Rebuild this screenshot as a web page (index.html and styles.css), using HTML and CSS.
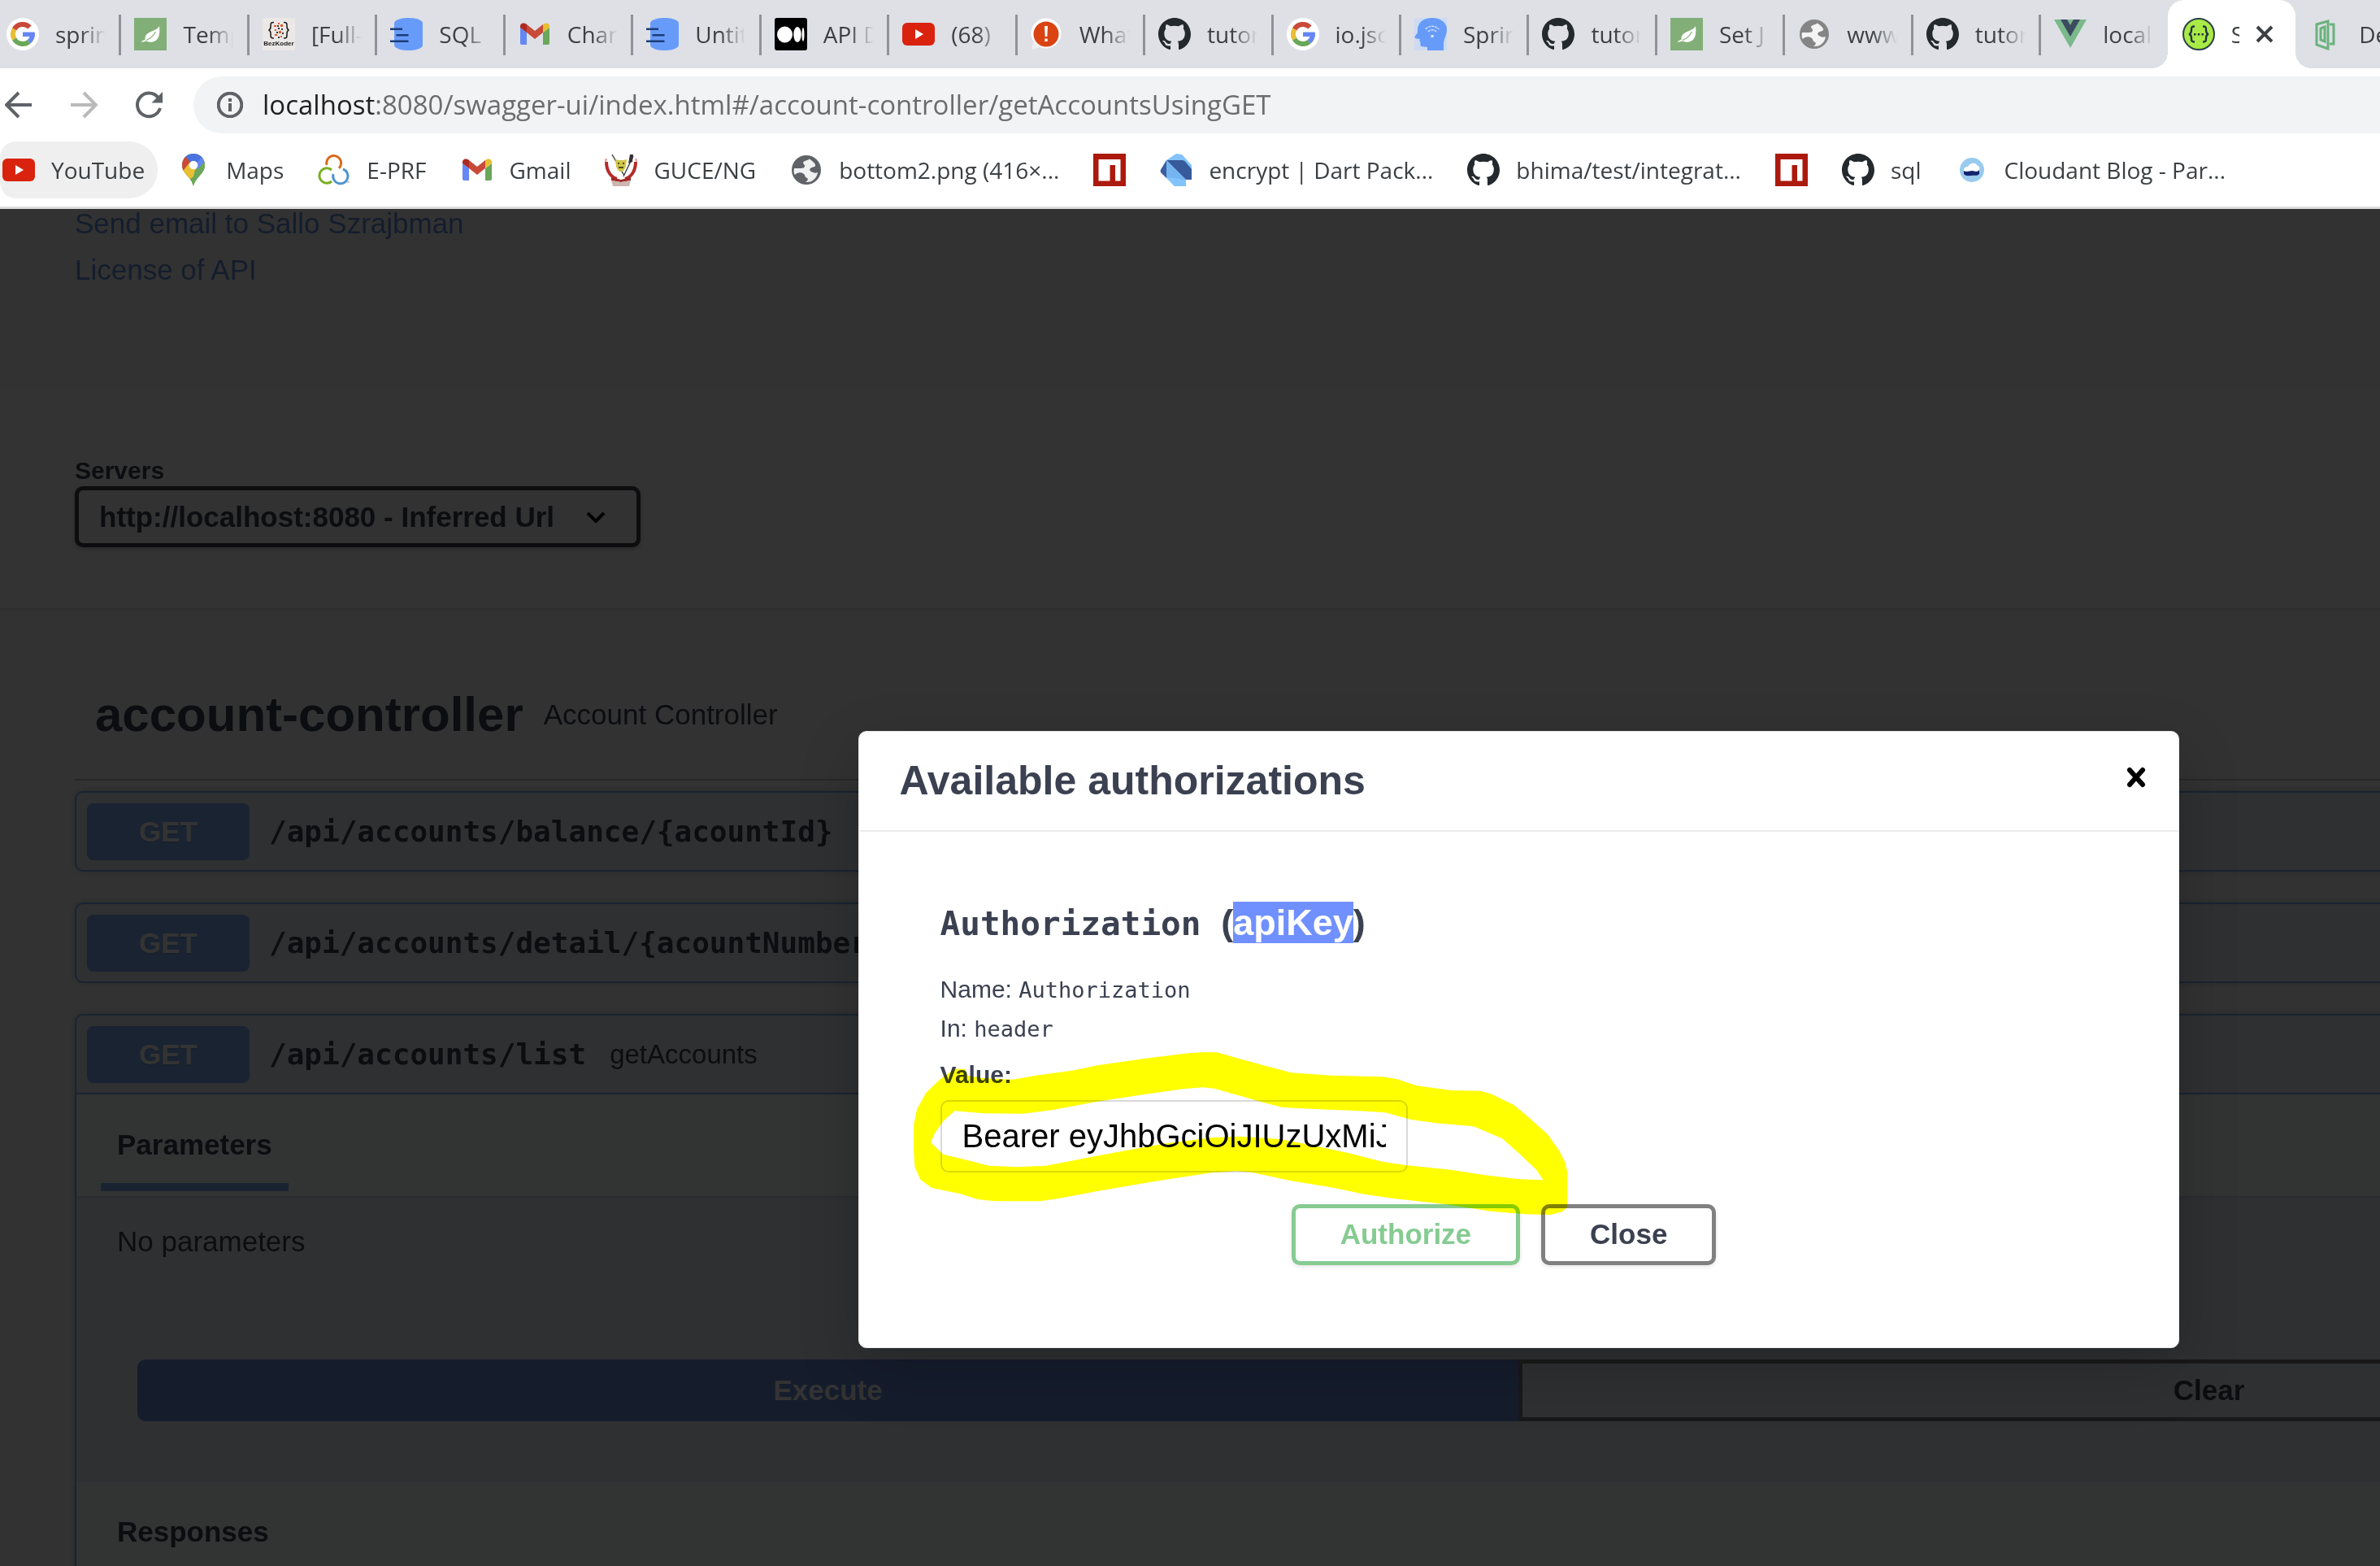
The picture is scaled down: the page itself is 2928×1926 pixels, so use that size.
FILE: index.html
```html
<!DOCTYPE html>
<html lang="en">
<head>
<meta charset="utf-8">
<title>Swagger UI</title>
<link rel="stylesheet" href="styles.css">
</head>
<body>
<svg class="sprite" aria-hidden="true">
  <symbol id="google" viewBox="0 0 40 40">
    <circle cx="20" cy="20" r="20" fill="#fff"/>
    <g fill="none" stroke-width="6">
      <path d="M28.500 11.500A12 12 0 0 0 9.600 14" stroke="#c94a38"/>
      <path d="M9.600 14A12 12 0 0 0 9.600 26" stroke="#e8be33"/>
      <path d="M9.600 26A12 12 0 0 0 27.700 29.200" stroke="#6aa75a"/>
      <path d="M27.700 29.200A12 12 0 0 0 32 20" stroke="#6487f4"/>
    </g>
    <path d="M20 17.500h14.700a15 15 0 0 1 0 5.500H20z" fill="#6487f4"/>
  </symbol>
  <symbol id="leaf" viewBox="0 0 40 40">
    <path d="M0 0h40v40H0z" fill="#82af78"/>
    <path d="M31 10c1 9 0 18-8 19.500-3 .6-6 .2-8-1.200-2 1-4 1.500-6.500 1.200.8-1.500 3-1.500 5-2.800C13 15 27 18 31 10z" fill="#fff"/>
    <path d="M15 27.500c5-2 9-6 11.500-10.500" fill="none" stroke="#82af78" stroke-width="1.200"/>
  </symbol>
  <symbol id="bez" viewBox="0 0 40 40">
    <path d="M0 0h40v40H0z" fill="#ebe8e5"/>
    <path d="M14 5.500c-4 0-4 1-4 5 0 3-.5 4-2.500 4.500 2 .5 2.500 2 2.500 5 0 4 0 5 4 5M26 5.500c4 0 4 1 4 5 0 3 .5 4 2.500 4.500-2 .5-2.500 2-2.500 5 0 4 0 5-4 5" fill="none" stroke="#222" stroke-width="1.600"/>
    <path d="M14 9h3v2h-3zM19 6h2v2h-2zM22 8h3v3h-3zM15 14h2v2h-2zM20 16h3v3h-3zM15 20h3v2h-3zM22 22h2v2h-2z" fill="#e05a30"/>
    <path d="M18 9h2v2h-2zM17 17h2v2h-2zM23 13h2v2h-2zM19 12h2v2h-2zM19 23h2v2h-2zM24 18h2v2h-2z" fill="#333"/>
    <text x="20" y="34" text-anchor="middle" font-family="Liberation Sans, sans-serif" font-weight="700" font-size="8" fill="#222">BezKoder</text>
  </symbol>
  <symbol id="sqldb" viewBox="0 0 40 40">
    <path d="M5 6C7 1 17 0 22.500 0S38 1 40 6v28c-2 5-12 6-17.500 6S7 39 5 34z" fill="#679bfa"/>
    <path d="M0 13.800h15M7.500 21.300h15M0 28.800h22.500" stroke="#1c3d78" stroke-width="2.500"/>
  </symbol>
  <symbol id="gmail" viewBox="0 0 40 40">
    <path d="M2 12l8 6v15H4a2 2 0 0 1-2-2z" fill="#6487f4"/>
    <path d="M38 12l-8 6v15h6a2 2 0 0 0 2-2z" fill="#6aa75a"/>
    <path d="M2 12c-1-5 4-7 8-4v10l-8-6z" fill="#ad2a22"/>
    <path d="M38 12c1-5-4-7-8-4v10l8-6z" fill="#e8be33"/>
    <path d="M10 8l10 8 10-8v10l-10 8-10-8z" fill="#c94a38"/>
  </symbol>
  <symbol id="medium" viewBox="0 0 40 40">
    <rect width="40" height="40" rx="3"/>
    <ellipse cx="12.500" cy="20.500" rx="9.500" ry="10" fill="#fff"/>
    <ellipse cx="28" cy="20.500" rx="4.700" ry="9.500" fill="#fff"/>
    <ellipse cx="35" cy="20.500" rx="1.500" ry="8.500" fill="#fff"/>
  </symbol>
  <symbol id="youtube" viewBox="0 0 40 40">
    <rect y="6" width="40" height="28" rx="6" fill="#d9230f"/>
    <path d="M16 14l10 6-10 6z" fill="#fff"/>
  </symbol>
  <symbol id="alert" viewBox="0 0 40 40">
    <circle cx="19" cy="19" r="18.500" fill="#fff"/><path d="M1 39l3-11 8 8z" fill="#eee"/>
    <circle cx="19" cy="20" r="15.500" fill="#d94412"/>
    <path d="M17 10h4l-.7 13h-2.600zM17.300 25.500h3.400V29h-3.400z" fill="#fff"/>
  </symbol>
  <symbol id="github" viewBox="0 0 16 16">
    <path fill="#24292e" d="M8 0C3.580 0 0 3.580 0 8c0 3.540 2.290 6.530 5.470 7.590.4.070.55-.17.55-.38 0-.19-.01-.82-.01-1.490-2.010.37-2.530-.49-2.690-.94-.09-.23-.48-.94-.82-1.130-.28-.15-.68-.52-.01-.53.630-.01 1.080.58 1.230.82.720 1.210 1.870.87 2.330.66.070-.52.280-.87.510-1.070-1.780-.2-3.640-.89-3.640-3.950 0-.87.310-1.590.820-2.150-.08-.2-.36-1.020.080-2.120 0 0 .67-.21 2.200.820.640-.18 1.320-.27 2-.27.680 0 1.360.090 2 .270 1.530-1.040 2.200-.82 2.200-.82.440 1.100.160 1.920.080 2.120.510.560.820 1.270.820 2.150 0 3.070-1.870 3.750-3.650 3.950.290.250.540.730.540 1.480 0 1.070-.01 1.930-.01 2.200 0 .210.150.460.550.380A8.013 8.013 0 0016 8c0-4.420-3.580-8-8-8z"/>
  </symbol>
  <symbol id="head" viewBox="0 0 40 40">
    <path d="M0 0h40v40H0z" fill="#cddaf2"/>
    <path d="M4 15C4 5 12 0 22 0s18 6 18 14c0 7-4 12-4 18v8H16v-4l-8-1c-1-2 0-4-1-6-1-1-1-2 0-3-3 0-6-1-7-2l4-6z" fill="#679bfa"/>
    <path d="M14 14c4-5 12-5 16 0M17 17c3-3 7-3 10 0" fill="none" stroke="#cfe0ff" stroke-width="1.500" stroke-dasharray="3 1"/>
    <path d="M20.500 21h3v3h-3z" fill="#e5eeff"/>
  </symbol>
  <symbol id="globe" viewBox="0 0 40 40">
    <circle cx="20" cy="20" r="18" fill="currentColor"/>
    <path d="M24 6c-2 3-7 2-8 5 0 2 2 2 2 4 0 3-3 3-6 3H5c-1 4 0 7 1 8 2-3 8-4 11-1 2 2 1 4 4 5 2 1 0 4-2 5 8 1 14-5 15-12-2 1-4 1-6 0-3-1-5-3-3-5s5-1 6-3-3-6-8-9z" fill="#fff" opacity=".9"/>
  </symbol>
  <symbol id="vue" viewBox="0 0 40 40">
    <path d="M0 2h40L20 37z" fill="#7aba8a"/><path d="M8 2h8l4 7 4-7h8L20 23z" fill="#3d4a60"/>
  </symbol>
  <symbol id="swagger" viewBox="0 0 40 40">
    <circle cx="20" cy="20" r="19" fill="#aaea46" stroke="#2c4148" stroke-width="2"/>
    <path d="M15 10.500c-4 0-4 1-4 4s-.5 5-3 5.500c2.500.5 3 2 3 5s0 4.500 4 4.500M25 10.500c4 0 4 1 4 4s.5 5 3 5.500c-2.500.5-3 2-3 5s0 4.500-4 4.500" fill="none" stroke="#203540" stroke-width="2.400"/>
    <path d="M14 19h2.500v2.500H14zM18.800 19h2.500v2.500h-2.500zM23.500 19H26v2.500h-2.500z" fill="#203540"/>
  </symbol>
  <symbol id="door" viewBox="0 0 40 40">
    <g fill="none" stroke="#6bb27c" stroke-width="3"><path d="M8 8l14-4v34L8 33zM13 13l5-2v18l-5-2zM24 8h5v24h-5"/></g>
  </symbol>
  <symbol id="maps" viewBox="0 0 40 40">
    <clipPath id="pin"><path d="M20 0c8 0 14 6 14 14 0 11-11 14-14 26C17 28 6 25 6 14 6 6 12 0 20 0z"/></clipPath>
    <g clip-path="url(#pin)">
      <path d="M0 0h40v40H0z" fill="#6aa75a"/>
      <path d="M4 20L30-6 44 6 20 28 9 37z" fill="#e8be33"/>
      <path d="M17 13L32 0h8v8L24 18z" fill="#6487f4"/><path d="M9 5L20 16 36-2H9z" fill="#4a72e0"/>
      <path d="M0 0h7l9 10-12 15z" fill="#c94a38"/>
      <path d="M22 20L36 6v34H17z" fill="#6aa75a"/><path d="M24 12L32 2l4 5-12 13z" fill="#6487f4"/>
    </g>
    <circle cx="20" cy="14" r="5.300" fill="#fff"/>
  </symbol>
  <symbol id="eprf" viewBox="0 0 40 40">
    <g fill="none" stroke-width="3">
      <path d="M11 14a9 9 0 1 1 15 4" stroke="#d96a1c"/>
      <path d="M17 20A9.200 9.200 0 1 0 17 34" stroke="#7aaf22"/>
      <path d="M19 25a9.200 9.200 0 1 0 12-6" stroke="#4f94d0"/>
    </g>
    <path d="M36 34h3v1.500h-3z" fill="#bbb"/>
  </symbol>
  <symbol id="guce" viewBox="0 0 40 40">
    <path d="M2 10c0 12 6 19 13 21M38 10c0 12-6 19-13 21" fill="none" stroke="#b52a2a" stroke-width="4"/>
    <path d="M2 9l-2-2M38 9l2-2" stroke="#e9a0a0" stroke-width="4"/>
    <path d="M9 1l15 26M35 3L23 28" stroke="#444" stroke-width="1.500"/>
    <path d="M31 1h4l-1 9-5 2z" fill="#333"/>
    <path d="M13 7l4 1h6l4-1-1 9c-2 4-3 6-6 6s-4-2-6-6z" fill="#cfc648"/>
    <path d="M16 11h2v2h-2zM22 11h2v2h-2zM17 16h6v2h-6z" fill="#554d20"/>
    <path d="M8 29l12 3 12-3v4l-12 2-12-2z" fill="#a32828"/><path d="M8 33l12 2 12-2-2 7H10z" fill="#cdb6ae"/>
  </symbol>
  <symbol id="npm" viewBox="0 0 40 40">
    <path d="M0 0h40v40H0z" fill="#ac190d"/><path d="M6.500 7h27v26.500H27V14h-6.500v19.500h-14z" fill="#fff"/>
  </symbol>
  <symbol id="dart" viewBox="0 0 40 40">
    <path d="M8 8L20 0l7 1 12 13v18h-7v8H18L7 29z" fill="#82c4fa"/>
    <path d="M8 8v22L1 23c-1-2 0-4 1-5z" fill="#3a5f9e"/>
    <path d="M8 8h18c4 0 5 1 7 4l6 7v13h-7z" fill="#375a9b"/>
    <path d="M8 8l24 24-14-2-10-1z" fill="#74b4f0"/>
  </symbol>
  <symbol id="cloudant" viewBox="0 0 40 40">
    <circle cx="20" cy="20" r="15" fill="#98cbee"/>
    <path d="M10 20h19v5c-3 3-6 1-9.500 2-4 0-7 1-9.500-2z" fill="#14246e"/>
    <path d="M10 21c-1-4 3-5 5-5 3-6 11-5 12-1 3 0 3 5 1 6-3 2-5 0-8 0s-7 2-10 0z" fill="#fff"/>
  </symbol>
</svg>

<header class="browser">
  <nav class="tabs" aria-label="Tabs">
    <button class="tab"><svg class="icon"><use href="#google"/></svg><span class="tab-title">spring</span></button>
    <button class="tab"><svg class="icon"><use href="#leaf"/></svg><span class="tab-title">Temp</span></button>
    <button class="tab"><svg class="icon"><use href="#bez"/></svg><span class="tab-title">[Full-</span></button>
    <button class="tab"><svg class="icon"><use href="#sqldb"/></svg><span class="tab-title">SQL</span></button>
    <button class="tab"><svg class="icon"><use href="#gmail"/></svg><span class="tab-title">Chan</span></button>
    <button class="tab"><svg class="icon"><use href="#sqldb"/></svg><span class="tab-title">Untit</span></button>
    <button class="tab"><svg class="icon"><use href="#medium"/></svg><span class="tab-title">API D</span></button>
    <button class="tab"><svg class="icon"><use href="#youtube"/></svg><span class="tab-title">(68)</span></button>
    <button class="tab"><svg class="icon"><use href="#alert"/></svg><span class="tab-title">What</span></button>
    <button class="tab"><svg class="icon"><use href="#github"/></svg><span class="tab-title">tutor</span></button>
    <button class="tab"><svg class="icon"><use href="#google"/></svg><span class="tab-title">io.json</span></button>
    <button class="tab"><svg class="icon"><use href="#head"/></svg><span class="tab-title">Spring</span></button>
    <button class="tab"><svg class="icon"><use href="#github"/></svg><span class="tab-title">tutor</span></button>
    <button class="tab"><svg class="icon"><use href="#leaf"/></svg><span class="tab-title">Set J</span></button>
    <button class="tab"><svg class="icon muted"><use href="#globe"/></svg><span class="tab-title">www.</span></button>
    <button class="tab"><svg class="icon"><use href="#github"/></svg><span class="tab-title">tutor</span></button>
    <button class="tab before-active"><svg class="icon"><use href="#vue"/></svg><span class="tab-title">locall</span></button>
    <button class="tab active"><svg class="icon"><use href="#swagger"/></svg><span class="tab-title short">S</span><svg class="tab-close" viewBox="0 0 22 22"><path d="M2 2l18 18M20 2L2 20"/></svg></button>
    <button class="tab"><svg class="icon"><use href="#door"/></svg><span class="tab-title">Dev</span></button>
  </nav>

  <div class="toolbar">
    <button class="nav-btn" aria-label="Back"><svg viewBox="0 0 34 34"><path d="M33 17H4M17 2L2 17l15 15"/></svg></button>
    <button class="nav-btn disabled" aria-label="Forward"><svg viewBox="0 0 34 34"><path d="M1 17h29M17 2l15 15-15 15"/></svg></button>
    <button class="nav-btn" aria-label="Reload"><svg viewBox="0 0 34 34"><path d="M28.500 8A14.300 14.300 0 1 0 31 21"/><path d="M34 1v13.500H20.500z" class="solid"/></svg></button>
    <div class="omnibox">
      <svg class="info" viewBox="0 0 32 32"><circle cx="16" cy="16" r="14.300"/><path d="M16 14v10M16 8v4"/></svg>
      <div class="url" role="textbox" contenteditable="true" spellcheck="false" aria-label="Address"><span class="host">localhost</span>:8080/swagger-ui/index.html#/account-controller/getAccountsUsingGET</div>
    </div>
  </div>

  <nav class="bookmarks" aria-label="Bookmarks">
    <a class="bookmark hovered" href="#"><svg class="icon"><use href="#youtube"/></svg>YouTube</a>
    <a class="bookmark" href="#"><svg class="icon"><use href="#maps"/></svg>Maps</a>
    <a class="bookmark" href="#"><svg class="icon"><use href="#eprf"/></svg>E-PRF</a>
    <a class="bookmark" href="#"><svg class="icon"><use href="#gmail"/></svg>Gmail</a>
    <a class="bookmark" href="#"><svg class="icon"><use href="#guce"/></svg>GUCE/NG</a>
    <a class="bookmark" href="#"><svg class="icon"><use href="#globe"/></svg>bottom2.png (416×...</a>
    <a class="bookmark" href="#" aria-label="npm"><svg class="icon"><use href="#npm"/></svg></a>
    <a class="bookmark" href="#"><svg class="icon"><use href="#dart"/></svg>encrypt | Dart Pack...</a>
    <a class="bookmark" href="#"><svg class="icon"><use href="#github"/></svg>bhima/test/integrat...</a>
    <a class="bookmark" href="#" aria-label="npm"><svg class="icon"><use href="#npm"/></svg></a>
    <a class="bookmark" href="#"><svg class="icon"><use href="#github"/></svg>sql</a>
    <a class="bookmark" href="#"><svg class="icon"><use href="#cloudant"/></svg>Cloudant Blog - Par...</a>
  </nav>
</header>

<div class="viewport">
  <main class="page">
    <section class="info-links">
      <a href="#">Send email to Sallo Szrajbman</a>
      <a href="#">License of API</a>
    </section>

    <section class="scheme">
      <label for="servers">Servers</label>
      <div class="server-select">
        <select id="servers"><option>http://localhost:8080 - Inferred Url</option></select>
        <svg class="chevron" viewBox="0 0 24 14"><path d="M2 2l10 10L22 2"/></svg>
      </div>
    </section>

    <section class="tag-section">
      <h3 class="tag">account-controller <small>Account Controller</small></h3>

      <div class="opblock">
        <div class="summary"><span class="method">GET</span><span class="path">/api/accounts/balance/{acountId}</span></div>
      </div>
      <div class="opblock">
        <div class="summary"><span class="method">GET</span><span class="path">/api/accounts/detail/{acountNumber}</span></div>
      </div>
      <div class="opblock open">
        <div class="summary"><span class="method">GET</span><span class="path">/api/accounts/list</span><span class="desc">getAccounts</span></div>
        <div class="section-header"><h4 class="section-tab selected">Parameters</h4></div>
        <div class="params">
          <p>No parameters</p>
          <div class="btn-group"><button class="execute">Execute</button><button class="clear">Clear</button></div>
        </div>
        <div class="section-header responses"><h4 class="section-tab">Responses</h4></div>
      </div>
    </section>
  </main>

  <div class="backdrop">
    <div class="dialog" role="dialog" aria-labelledby="dialog-title">
      <div class="dialog-header">
        <h3 id="dialog-title">Available authorizations</h3>
        <button class="dialog-close" aria-label="Close dialog"><svg viewBox="0 0 24 26"><path d="M4 4l16 18M20 4L4 22"/></svg></button>
      </div>
      <div class="dialog-body">
        <h4 class="auth-name"><code>Authorization </code>(<mark>apiKey</mark>)</h4>
        <p class="auth-row">Name: <code>Authorization</code></p>
        <p class="auth-row">In: <code>header</code></p>
        <label class="auth-label" for="token">Value:</label>
        <input class="auth-input" id="token" type="text" value="Bearer eyJhbGciOiJIUzUxMiJ9">
        <div class="auth-actions">
          <button class="btn authorize">Authorize</button>
          <button class="btn">Close</button>
        </div>
      </div>
      <svg class="highlighter" viewBox="118 71 1146 600" preserveAspectRatio="none" aria-hidden="true">
        <path fill-rule="evenodd" d="M190 133L208 133L212 158L240 167L292 172L330 158L400 138L440 120L530 93L600 75L628 71L650 72L690 96L740 124L780 147L850 157L940 162L965 170L1000 195L1060 212L1112 214L1130 225L1170 265L1190 300L1230 375L1250 435L1260 475L1264 510V645L1255 660L1235 671L1190 669L1130 658L1050 632L960 611L910 596L850 570L780 546L710 514L685 510L640 516L540 548L440 584L370 612L340 621H260L230 614L200 594L150 572L130 542L120 495L118 430V340L124 280L140 220L165 170ZM190 288L240 297L310 298L360 285L440 253L520 228L590 207L625 201L645 205L680 226L730 256L765 275L830 282L900 288L945 294L990 320L1040 334L1100 345L1150 390L1180 445L1210 505L1222 543L1180 540L1120 525L1060 505L980 488L940 475L880 443L800 408L760 392L690 382L640 387L560 408L480 438L420 462L350 490L300 495L250 490L220 474L170 448L148 405L155 370L170 325Z"/>
      </svg>
    </div>
  </div>
</div>
</body>
</html>
```
FILE: styles.css
```css
* { box-sizing: border-box; }

html, body { height: 100%; }

body {
  margin: 0;
  display: flex;
  flex-direction: column;
  overflow: hidden;
  color: #3b4151;
  font-family: "Liberation Sans", Arial, sans-serif;
  font-size: 35px;
}

button, select, input { font: inherit; color: inherit; }
button { border: 0; background: none; padding: 0; margin: 0; }
h3, h4, p { margin: 0; }
a { text-decoration: none; }
svg { display: block; flex: none; }
.sprite { position: absolute; width: 0; height: 0; }

/* Browser chrome */
.browser {
  flex: none;
  background: #fff;
  border-bottom: 3px solid #dcdcdc;
  font-family: "Open Sans", "Noto Sans", sans-serif;
  color: #3c4043;
}
.icon { width: 40px; height: 40px; color: #5f6368; }
.icon.muted { color: #858585; }

.tabs {
  display: flex;
  height: 84px;
  padding-right: 10px;
  margin-left: -10px;
  overflow: hidden;
  background: #dee0e6;
}
.tab {
  position: relative;
  flex: 0 0 5.378%;
  display: flex;
  align-items: center;
  gap: 20px;
  padding-left: 18px;
  font-size: 28px;
  line-height: 40px;
}
.tab::after {
  content: "";
  position: absolute;
  right: -2px;
  top: 18px;
  width: 3px;
  height: 50px;
  background: #8f9297;
}
.tab.before-active::after { display: none; }
.tab-title {
  width: 62px;
  overflow: hidden;
  white-space: nowrap;
  text-align: left;
  -webkit-mask-image: linear-gradient(90deg, #000 50%, transparent);
  mask-image: linear-gradient(90deg, #000 50%, transparent);
}
.tab-title.short { width: 10px; -webkit-mask-image: none; mask-image: none; }
.tab.active { background: #fff; border-radius: 20px 20px 0 0; z-index: 1; }
.tab.active::before,
.tab.active::after {
  content: "";
  position: absolute;
  display: block;
  top: auto;
  bottom: 0;
  width: 20px;
  height: 20px;
}
.tab.active::before { left: -20px; background: radial-gradient(circle at 0 0, transparent 20px, #fff 20px); }
.tab.active::after { right: -20px; background: radial-gradient(circle at 100% 0, transparent 20px, #fff 20px); }
.tab-close { width: 22px; height: 22px; fill: none; stroke: #3c4043; stroke-width: 4; }

.toolbar {
  display: flex;
  align-items: center;
  height: 90px;
  padding-left: 6px;
  gap: 46px;
}
.nav-btn svg { width: 34px; height: 34px; fill: none; stroke: #5f6368; stroke-width: 4; }
.nav-btn .solid { fill: #5f6368; stroke: none; }
.nav-btn.disabled svg { stroke: #bababa; }
.omnibox {
  flex: 1;
  display: flex;
  align-items: center;
  gap: 24px;
  height: 70px;
  margin-left: -8px;
  padding-left: 29px;
  background: #f1f3f4;
  border-radius: 35px 0 0 35px;
}
.info { width: 32px; height: 32px; fill: none; stroke: #5f6368; stroke-width: 4; }
.url { color: #6a6d70; font-size: 33px; line-height: 48px; white-space: nowrap; }
.host { color: #202124; }

.bookmarks {
  display: flex;
  height: 80px;
  overflow: hidden;
}
.bookmark {
  display: flex;
  align-items: center;
  gap: 20px;
  height: 70px;
  padding: 0 18px 0 24px;
  color: inherit;
  font-size: 28px;
  white-space: nowrap;
}
.bookmark.hovered {
  padding: 0 16px 0 3px;
  background: #efefef;
  border-radius: 20px 35px 35px 20px;
}

/* Page under the dialog */
.viewport {
  position: relative;
  flex: 1;
  overflow: hidden;
  background: #fafafa;
}
.page { width: 127.6%; }
.info-links {
  display: flex;
  flex-direction: column;
  gap: 21px;
  align-items: flex-start;
  padding: 0 92px 128px;
  line-height: 36px;
}
.info-links a { color: #6690dc; }

.scheme {
  padding: 84px 92px 75px;
  background: #fff;
  box-shadow: 0 2px 5px rgba(0, 0, 0, .15);
}
.scheme label { display: block; margin-bottom: 2px; font-size: 30px; font-weight: 700; line-height: 34px; }
.server-select { position: relative; width: 696px; }
.server-select select {
  display: block;
  width: 100%;
  height: 75px;
  padding: 0 100px 0 25px;
  appearance: none;
  background: #f7f7f7;
  border: 5px solid #41444e;
  border-radius: 10px;
  box-shadow: 0 2px 5px rgba(0, 0, 0, .25);
  font-weight: 700;
}
.chevron { position: absolute; right: 43px; top: 31px; width: 24px; height: 14px; fill: none; stroke: #000; stroke-width: 4; }

.tag-section { padding: 96px 92px 0; }
.tag {
  display: flex;
  align-items: center;
  gap: 25px;
  padding: 0 25px 44px;
  margin-bottom: 13px;
  border-bottom: 2px solid #c4c6ca;
  font-size: 60px;
  line-height: 70px;
}
.tag small { font-size: 35px; font-weight: 400; line-height: 40px; }

.opblock {
  margin-bottom: 38px;
  background: #ebf0fa;
  border: 2px solid #84b0f5;
  border-radius: 10px;
  box-shadow: 0 0 8px rgba(0, 0, 0, .19);
}
.summary { display: flex; align-items: center; height: 95px; padding: 0 13px; }
.method {
  width: 200px;
  margin-right: 24px;
  background: #84b0f5;
  border-radius: 8px;
  color: #fff;
  font-weight: 700;
  line-height: 70px;
  text-align: center;
  text-shadow: 0 2px 0 rgba(0, 0, 0, .1);
}
.path { font-family: "DejaVu Sans Mono", monospace; font-size: 36px; font-weight: 700; }
.desc { margin-left: 29px; font-size: 33px; }

.open .summary { height: 97px; border-bottom: 2px solid #84b0f5; }
.section-header {
  position: relative;
  display: flex;
  height: 125px;
  padding: 0 30px;
  background: #fafffc;
  box-shadow: 0 2px 5px rgba(0, 0, 0, .1);
}
.section-header.responses { height: 200px; }
.section-tab { padding: 42px 20px 27px; font-size: 35px; line-height: 40px; }
.section-tab.selected { height: 119px; border-bottom: 10px solid #84b0f5; }
.params { padding: 36px 75px 74px; }
.params p { margin: 0 -25px; line-height: 40px; }
.btn-group { display: flex; margin-top: 125px; }
.btn-group button { flex: 1 1 0; height: 76px; font-weight: 700; }
.btn-group .execute { flex-basis: 10px; background: #6a8ddb; color: #fff; border-radius: 10px 0 0 10px; }
.btn-group .clear { border: 5px solid #7d7d7d; border-radius: 0 10px 10px 0; }

/* Authorization dialog */
.backdrop {
  position: absolute;
  left: 0;
  top: 0;
  width: 127.6%;
  height: 122.4%;
  display: grid;
  place-items: center;
  background: rgba(0, 0, 0, .8);
}
.dialog {
  position: relative;
  width: 1625px;
  background: #fff;
  border: 1px solid #ebebeb;
  border-radius: 10px;
  box-shadow: 0 25px 75px rgba(0, 0, 0, .2);
}
.dialog-header {
  display: flex;
  align-items: center;
  justify-content: space-between;
  padding: 31px 40px 32px 50px;
  border-bottom: 2px solid #ebebeb;
}
.dialog-header h3 { font-size: 50px; line-height: 58px; }
.dialog-close svg { width: 24px; height: 26px; margin-bottom: 8px; fill: none; stroke: #000; stroke-width: 6; stroke-linecap: round; }
.dialog-body { padding: 86px 100px 101px; }
.dialog code { font-family: "DejaVu Sans Mono", monospace; line-height: 1; white-space: pre; }
.auth-name { margin-bottom: 39px; font-size: 45px; line-height: 52px; }
.auth-name code { font-size: 41px; }
.auth-name mark { background: #7090ff; color: #fff; }
.auth-row { margin-bottom: 14px; font-size: 30px; line-height: 34px; }
.auth-row code { font-size: 27px; }
.auth-label { display: block; padding-top: 9px; font-size: 30px; font-weight: 700; line-height: 34px; }
.auth-input {
  display: block;
  width: 575px;
  height: 89px;
  margin-top: 14px;
  padding: 0 25px;
  background: #fff;
  border: 2px solid #d9d9d9;
  border-radius: 10px;
  color: #000;
  font-size: 40px;
}
.auth-actions { display: flex; justify-content: center; gap: 26px; margin-top: 39px; padding-right: 36px; }
.btn {
  height: 75px;
  padding: 0 55px;
  border: 5px solid #808080;
  border-radius: 10px;
  box-shadow: 0 2px 5px rgba(0, 0, 0, .1);
  font-weight: 700;
}
.btn.authorize { border-color: #86cb92; color: #86cb92; }
.highlighter {
  position: absolute;
  left: 67px;
  top: 394px;
  width: 804px;
  height: 200px;
  fill: #ff0;
  mix-blend-mode: multiply;
  pointer-events: none;
}
```
